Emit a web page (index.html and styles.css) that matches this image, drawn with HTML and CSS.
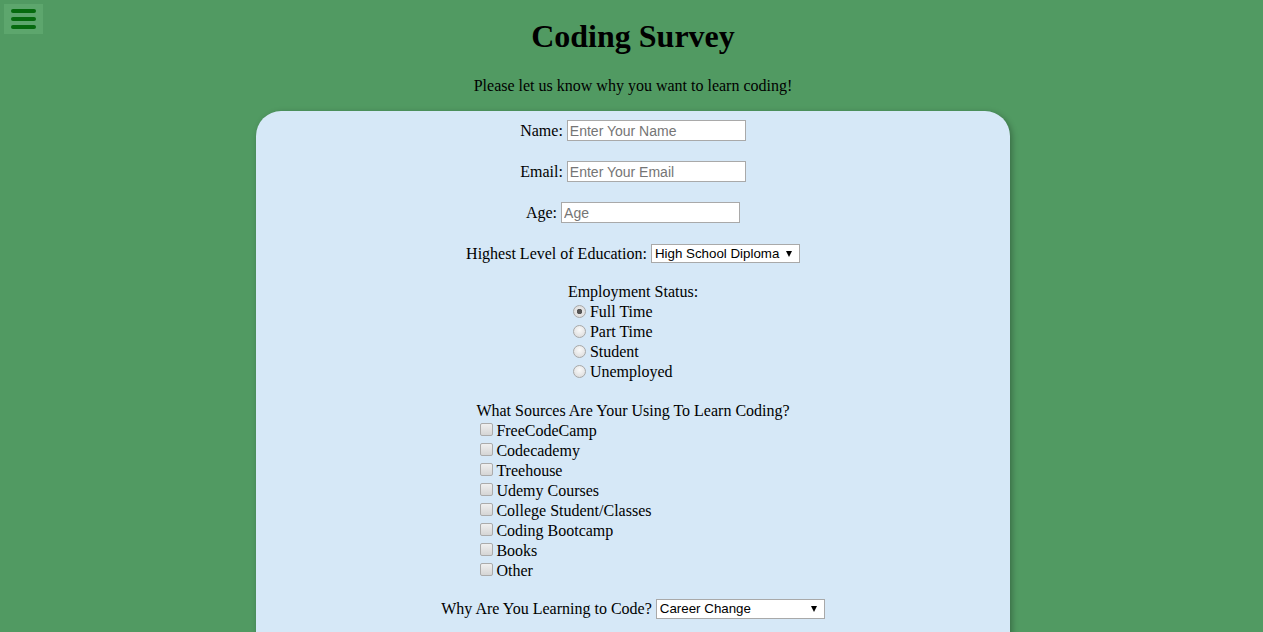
FILE: index.html
```html
<!DOCTYPE html>
<html>
<head>
<meta charset="utf-8">
<title>Coding Survey</title>
<link rel="stylesheet" href="styles.css">
</head>
<body>
<div class="menu"><span></span><span></span><span></span></div>
<h1 class="title">Coding Survey</h1>
<p class="subtitle">Please let us know why you want to learn coding!</p>
<form class="card">
  <div class="row"><label>Name:</label><input class="text" type="text" placeholder="Enter Your Name"></div>
  <div class="row"><label>Email:</label><input class="text" type="text" placeholder="Enter Your Email"></div>
  <div class="row"><label>Age:</label><input class="text" type="text" placeholder="Age"></div>
  <div class="row"><label>Highest Level of Education:</label><span class="sel-wrap"><select class="sel sel-edu"><option>High School Diploma</option></select></span></div>
  <div class="group group-emp">
    <div class="group-inner">
      <div class="line">Employment Status:</div>
      <div class="line"><input class="radio" type="radio" name="emp" checked>Full Time</div>
      <div class="line"><input class="radio" type="radio" name="emp">Part Time</div>
      <div class="line"><input class="radio" type="radio" name="emp">Student</div>
      <div class="line"><input class="radio" type="radio" name="emp">Unemployed</div>
    </div>
  </div>
  <div class="group group-src">
    <div class="group-inner">
      <div class="line">What Sources Are Your Using To Learn Coding?</div>
      <div class="line"><input class="check" type="checkbox">FreeCodeCamp</div>
      <div class="line"><input class="check" type="checkbox">Codecademy</div>
      <div class="line"><input class="check" type="checkbox">Treehouse</div>
      <div class="line"><input class="check" type="checkbox">Udemy Courses</div>
      <div class="line"><input class="check" type="checkbox">College Student/Classes</div>
      <div class="line"><input class="check" type="checkbox">Coding Bootcamp</div>
      <div class="line"><input class="check" type="checkbox">Books</div>
      <div class="line"><input class="check" type="checkbox">Other</div>
    </div>
  </div>
  <div class="row"><label>Why Are You Learning to Code?</label><span class="sel-wrap"><select class="sel sel-why"><option>Career Change</option></select></span></div>
</form>
</body>
</html>
```
FILE: styles.css
```css
html, body {
  margin: 0;
  padding: 0;
}
body {
  background: #519a62;
  font-family: "Liberation Serif", "Times New Roman", serif;
  font-size: 16px;
  color: #000;
  overflow: hidden;
  padding-left: 3px;
}
.menu {
  position: fixed;
  left: 4px;
  top: 4px;
  width: 39px;
  height: 30px;
  background: #5da66d;
  display: flex;
  flex-direction: column;
  align-items: center;
  justify-content: center;
  gap: 4px;
}
.menu span {
  display: block;
  width: 25px;
  height: 4px;
  border-radius: 2px;
  background: #056a0e;
}
.title {
  margin: 0;
  padding-top: 18px;
  text-align: center;
  font-size: 32px;
  line-height: 37px;
  font-weight: bold;
}
.subtitle {
  margin: 22px 0 0;
  text-align: center;
  line-height: 18px;
}
.card {
  width: 754px;
  margin: 16px auto 0;
  padding: 9px 0 40px;
  background: #d6e8f7;
  border-radius: 25px;
  box-shadow: 2px 2px 6px rgba(0, 0, 0, 0.3);
  box-sizing: border-box;
  min-height: 560px;
}
.row {
  display: flex;
  justify-content: center;
  align-items: center;
  height: 21px;
  margin-bottom: 20px;
}
.row label {
  margin-right: 4px;
}
.text {
  width: 179px;
  height: 21px;
  box-sizing: border-box;
  border: 1px solid #a9a9a9;
  padding: 1px 2px;
  font-family: "Liberation Sans", Arial, sans-serif;
  font-size: 14px;
  background: #fff;
  outline: none;
}
.text::placeholder {
  color: #757575;
}
.sel-wrap {
  position: relative;
  display: inline-flex;
}
.sel-wrap::after {
  content: "";
  position: absolute;
  right: 8px;
  top: 7px;
  border-left: 3.5px solid transparent;
  border-right: 3.5px solid transparent;
  border-top: 6px solid #000;
  pointer-events: none;
}
.sel {
  height: 19px;
  box-sizing: border-box;
  border: 1px solid #a9a9a9;
  background: #fff;
  font-family: "Liberation Sans", Arial, sans-serif;
  font-size: 13.33px;
  padding: 0 0 0 3px;
  border-radius: 0;
  appearance: none;
  -webkit-appearance: none;
  color: #000;
}
.sel-edu {
  width: 149px;
}
.sel-why {
  width: 169px;
  height: 20px;
}
.group {
  text-align: center;
}
.group-emp {
  margin-top: -2px;
  margin-bottom: 19px;
}
.group-src {
  margin-bottom: 17px;
}
.group-inner {
  display: inline-block;
  text-align: left;
}
.line {
  height: 20px;
  line-height: 20px;
  display: flex;
  align-items: center;
}
.radio {
  appearance: none;
  -webkit-appearance: none;
  width: 13px;
  height: 13px;
  margin: 0 4px 2px 5px;
  border-radius: 50%;
  border: 1px solid #a8a8a8;
  background: radial-gradient(circle at 50% 35%, #fafafa, #d8d8d8);
  box-sizing: border-box;
}
.radio:checked {
  background: radial-gradient(circle, #555 0, #555 2.5px, #e6e6e6 3px, #d8d8d8 100%);
}
.check {
  appearance: none;
  -webkit-appearance: none;
  width: 13px;
  height: 13px;
  margin: 0 3px 4px 4px;
  border-radius: 2px;
  border: 1px solid #ababab;
  background: linear-gradient(#f0f0f0, #d5d5d5);
  box-sizing: border-box;
}
```
